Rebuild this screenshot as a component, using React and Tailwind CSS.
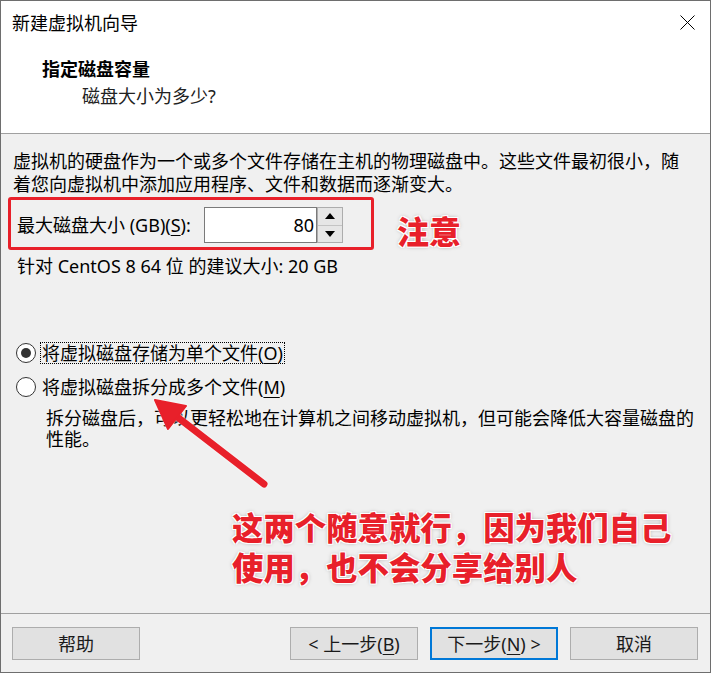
import React from "react";

const FONT = "font-[family-name:'Noto_Sans','Noto_Sans_CJK_SC',sans-serif]";
const CJK = "font-[family-name:'Noto_Sans_CJK_SC',sans-serif]";
const RED = "text-[#e8202a]";
const HALO =
  "[text-shadow:-1px_-1px_0_#fff,1px_-1px_0_#fff,-1px_1px_0_#fff,1px_1px_0_#fff,0_0_4px_rgba(0,0,0,0.35)]";

function U({ children }) {
  return <span className="underline underline-offset-[3px] decoration-1">{children}</span>;
}

function Radio({ checked }) {
  return (
    <span className="w-[20px] h-[20px] rounded-full border border-[#333] bg-white flex items-center justify-center shrink-0">
      {checked && <span className="w-[10px] h-[10px] rounded-full bg-[#333]" />}
    </span>
  );
}

function Btn({ children, primary }) {
  return (
    <button
      className={
        "w-[128px] h-[33px] bg-[#e1e1e1] flex items-center justify-center text-[18px] leading-none text-[#1a1a1a] " +
        (primary ? "border-2 border-[#0078d7]" : "border border-[#adadad]")
      }
    >
      {children}
    </button>
  );
}

export default function App() {
  return (
    <div className={"relative w-[712px] h-[673px] bg-white overflow-hidden " + FONT}>
      <div className="w-[711px] h-[673px] border border-[#6e6e6e] flex flex-col bg-[#f0f0f0] text-black">
        {/* header */}
        <div className="h-[133px] bg-white border-b border-[#a0a0a0] shrink-0">
          <div className="h-[42px] flex items-center justify-between pl-[11px] pr-[15px]">
            <span className={"text-[18px] leading-[24px] " + CJK}>新建虚拟机向导</span>
            <svg width="15" height="15" viewBox="0 0 15 15" className="mt-[1px]">
              <path d="M0.5 0.5 L14.5 14.5 M14.5 0.5 L0.5 14.5" stroke="#000" strokeWidth="1" fill="none" />
            </svg>
          </div>
          <div className={"mt-[13px] pl-[41px] text-[18px] leading-[24px] font-bold " + CJK}>指定磁盘容量</div>
          <div className="mt-[4px] pl-[81px] text-[18px] leading-[24px] text-[#222]">磁盘大小为多少?</div>
        </div>

        {/* body */}
        <div className="flex-1 pl-[12px] pr-[10px] pt-[16px]">
          <div className="text-[18px] leading-[23px]">
            <div>虚拟机的硬盘作为一个或多个文件存储在主机的物理磁盘中。这些文件最初很小，随</div>
            <div>着您向虚拟机中添加应用程序、文件和数据而逐渐变大。</div>
          </div>

          <div className="mt-[11px] ml-[4px] flex items-center h-[36px]">
            <span className="w-[187px] text-[18px] leading-[24px]">
              最大磁盘大小 (GB)(<U>S</U>):
            </span>
            <div className="w-[113px] h-[36px] border border-[#7a7a7a] bg-white flex items-center justify-end pr-[2px] text-[18px]">
              80
            </div>
            <div className="w-[26px] h-[36px] border border-[#adadad] bg-[#e6e6e6] flex flex-col">
              <div className="flex-1 flex items-center justify-center border-b border-[#c4c4c4]">
                <svg width="10" height="6" viewBox="0 0 10 6">
                  <path d="M5 0 L10 6 L0 6 Z" fill="#000" />
                </svg>
              </div>
              <div className="flex-1 flex items-center justify-center">
                <svg width="10" height="6" viewBox="0 0 10 6">
                  <path d="M0 0 L10 0 L5 6 Z" fill="#000" />
                </svg>
              </div>
            </div>
          </div>

          <div className="mt-[11px] ml-[4px] text-[18px] leading-[24px]">针对 CentOS 8 64 位 的建议大小: 20 GB</div>

          <div className="mt-[64px] ml-[3px] flex items-center h-[22px]">
            <Radio checked />
            <span className="ml-[4px] h-[22px] px-[1px] flex items-center border border-dotted border-black text-[18px] leading-[20px]">
              将虚拟磁盘存储为单个文件(<U>O</U>)
            </span>
          </div>
          <div className="mt-[12px] ml-[3px] flex items-center h-[22px]">
            <Radio />
            <span className="ml-[6px] text-[18px] leading-[20px]">
              将虚拟磁盘拆分成多个文件(<U>M</U>)
            </span>
          </div>
          <div className="mt-[10px] ml-[33px] text-[18px] leading-[21px]">
            <div>拆分磁盘后，可以更轻松地在计算机之间移动虚拟机，但可能会降低大容量磁盘的</div>
            <div>性能。</div>
          </div>
        </div>

        {/* footer */}
        <div className="h-[59px] shrink-0 border-t border-[#a0a0a0] pt-[13px] pl-[11px] pr-[12px] flex items-start justify-between">
          <Btn>帮助</Btn>
          <div className="flex gap-[12px]">
            <Btn>
              &lt; 上一步(<U>B</U>)
            </Btn>
            <Btn primary>
              下一步(<U>N</U>) &gt;
            </Btn>
            <Btn>取消</Btn>
          </div>
        </div>
      </div>

      {/* annotations */}
      <div className="absolute left-[8px] top-[197px] w-[366px] h-[53px] border-[3px] border-[#e8202a] rounded-[3px]" />
      <div
        className={
          "absolute left-[397px] top-[210px] text-[32px] leading-[40px] font-black " + RED + " " + HALO + " " + CJK
        }
      >
        注意
      </div>

      <svg className="absolute left-0 top-0" width="712" height="673" viewBox="0 0 712 673">
        <g style={{ filter: "drop-shadow(0 0 1px rgba(255,255,255,0.9))" }}>
          <line x1="264" y1="484" x2="176" y2="416" stroke="#e8202a" strokeWidth="7" strokeLinecap="round" />
          <path d="M155 400 L186 406 L168 429 Z" fill="#e8202a" stroke="#e8202a" strokeWidth="2" strokeLinejoin="round" />
        </g>
      </svg>

      <div
        className={
          "absolute left-[232px] top-[507px] text-[31.4px] leading-[40px] font-black " + RED + " " + HALO + " " + CJK
        }
      >
        <div>这两个随意就行，因为我们自己</div>
        <div>使用，也不会分享给别人</div>
      </div>
    </div>
  );
}
